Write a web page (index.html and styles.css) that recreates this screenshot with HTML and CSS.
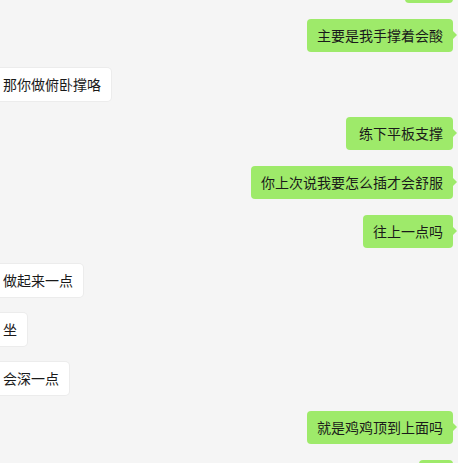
FILE: index.html
```html
<!DOCTYPE html>
<html lang="zh-CN">
<head>
    <meta charset="UTF-8" />
    <meta name="viewport" content="width=device-width, initial-scale=1.0" />
    <title>聊天记录</title>
    <link rel="stylesheet" href="styles.css">
</head>
<body>
    <div class="chat">
        <div class="msg me"><div class="bubble partial wide"></div></div>
        <div class="msg me"><div class="bubble">主要是我手撑着会酸</div></div>
        <div class="msg other"><div class="bubble">那你做俯卧撑咯</div></div>
        <div class="msg me"><div class="bubble">&nbsp;练下平板支撑</div></div>
        <div class="msg me"><div class="bubble">你上次说我要怎么插才会舒服</div></div>
        <div class="msg me"><div class="bubble">往上一点吗</div></div>
        <div class="msg other"><div class="bubble">做起来一点</div></div>
        <div class="msg other"><div class="bubble">坐</div></div>
        <div class="msg other"><div class="bubble">会深一点</div></div>
        <div class="msg me"><div class="bubble">就是鸡鸡顶到上面吗</div></div>
        <div class="msg me"><div class="bubble partial narrow"></div></div>
    </div>
</body>
</html>
```

FILE: styles.css
```css
:root {
    --bg: #f5f5f5;
    --green: #9eea6a;
    --white: #ffffff;
    --text: #1a1a1a;
}
html, body {
    margin: 0;
    background: var(--bg);
    overflow: hidden;
}
body {
    font-family: "Noto Sans CJK SC", "Noto Sans", sans-serif;
    font-size: 14px;
    color: var(--text);
}
.chat {
    display: flex;
    flex-direction: column;
    gap: 16px;
    margin-top: -30px;
    padding: 0 5px 0 0;
}
.msg {
    display: flex;
}
.msg.me {
    justify-content: flex-end;
}
.msg.other {
    justify-content: flex-start;
    margin-left: -7px;
}
.bubble {
    position: relative;
    padding: 8px 10px;
    line-height: 17px;
    border-radius: 4px;
    white-space: pre;
}
/* bubbles cut off by the top / bottom edge */
.bubble.partial {
    height: 17px;
    padding: 8px 0;
}
.bubble.wide {
    width: 48px;
}
.bubble.narrow {
    width: 34px;
}
.me .bubble {
    background: var(--green);
}
.me .bubble::after {
    content: "";
    position: absolute;
    right: -4px;
    top: 12px;
    border-left: 4px solid var(--green);
    border-top: 4px solid transparent;
    border-bottom: 4px solid transparent;
}
.other .bubble {
    background: var(--white);
    box-shadow: 0 0 0 1px #ececec;
}
```
